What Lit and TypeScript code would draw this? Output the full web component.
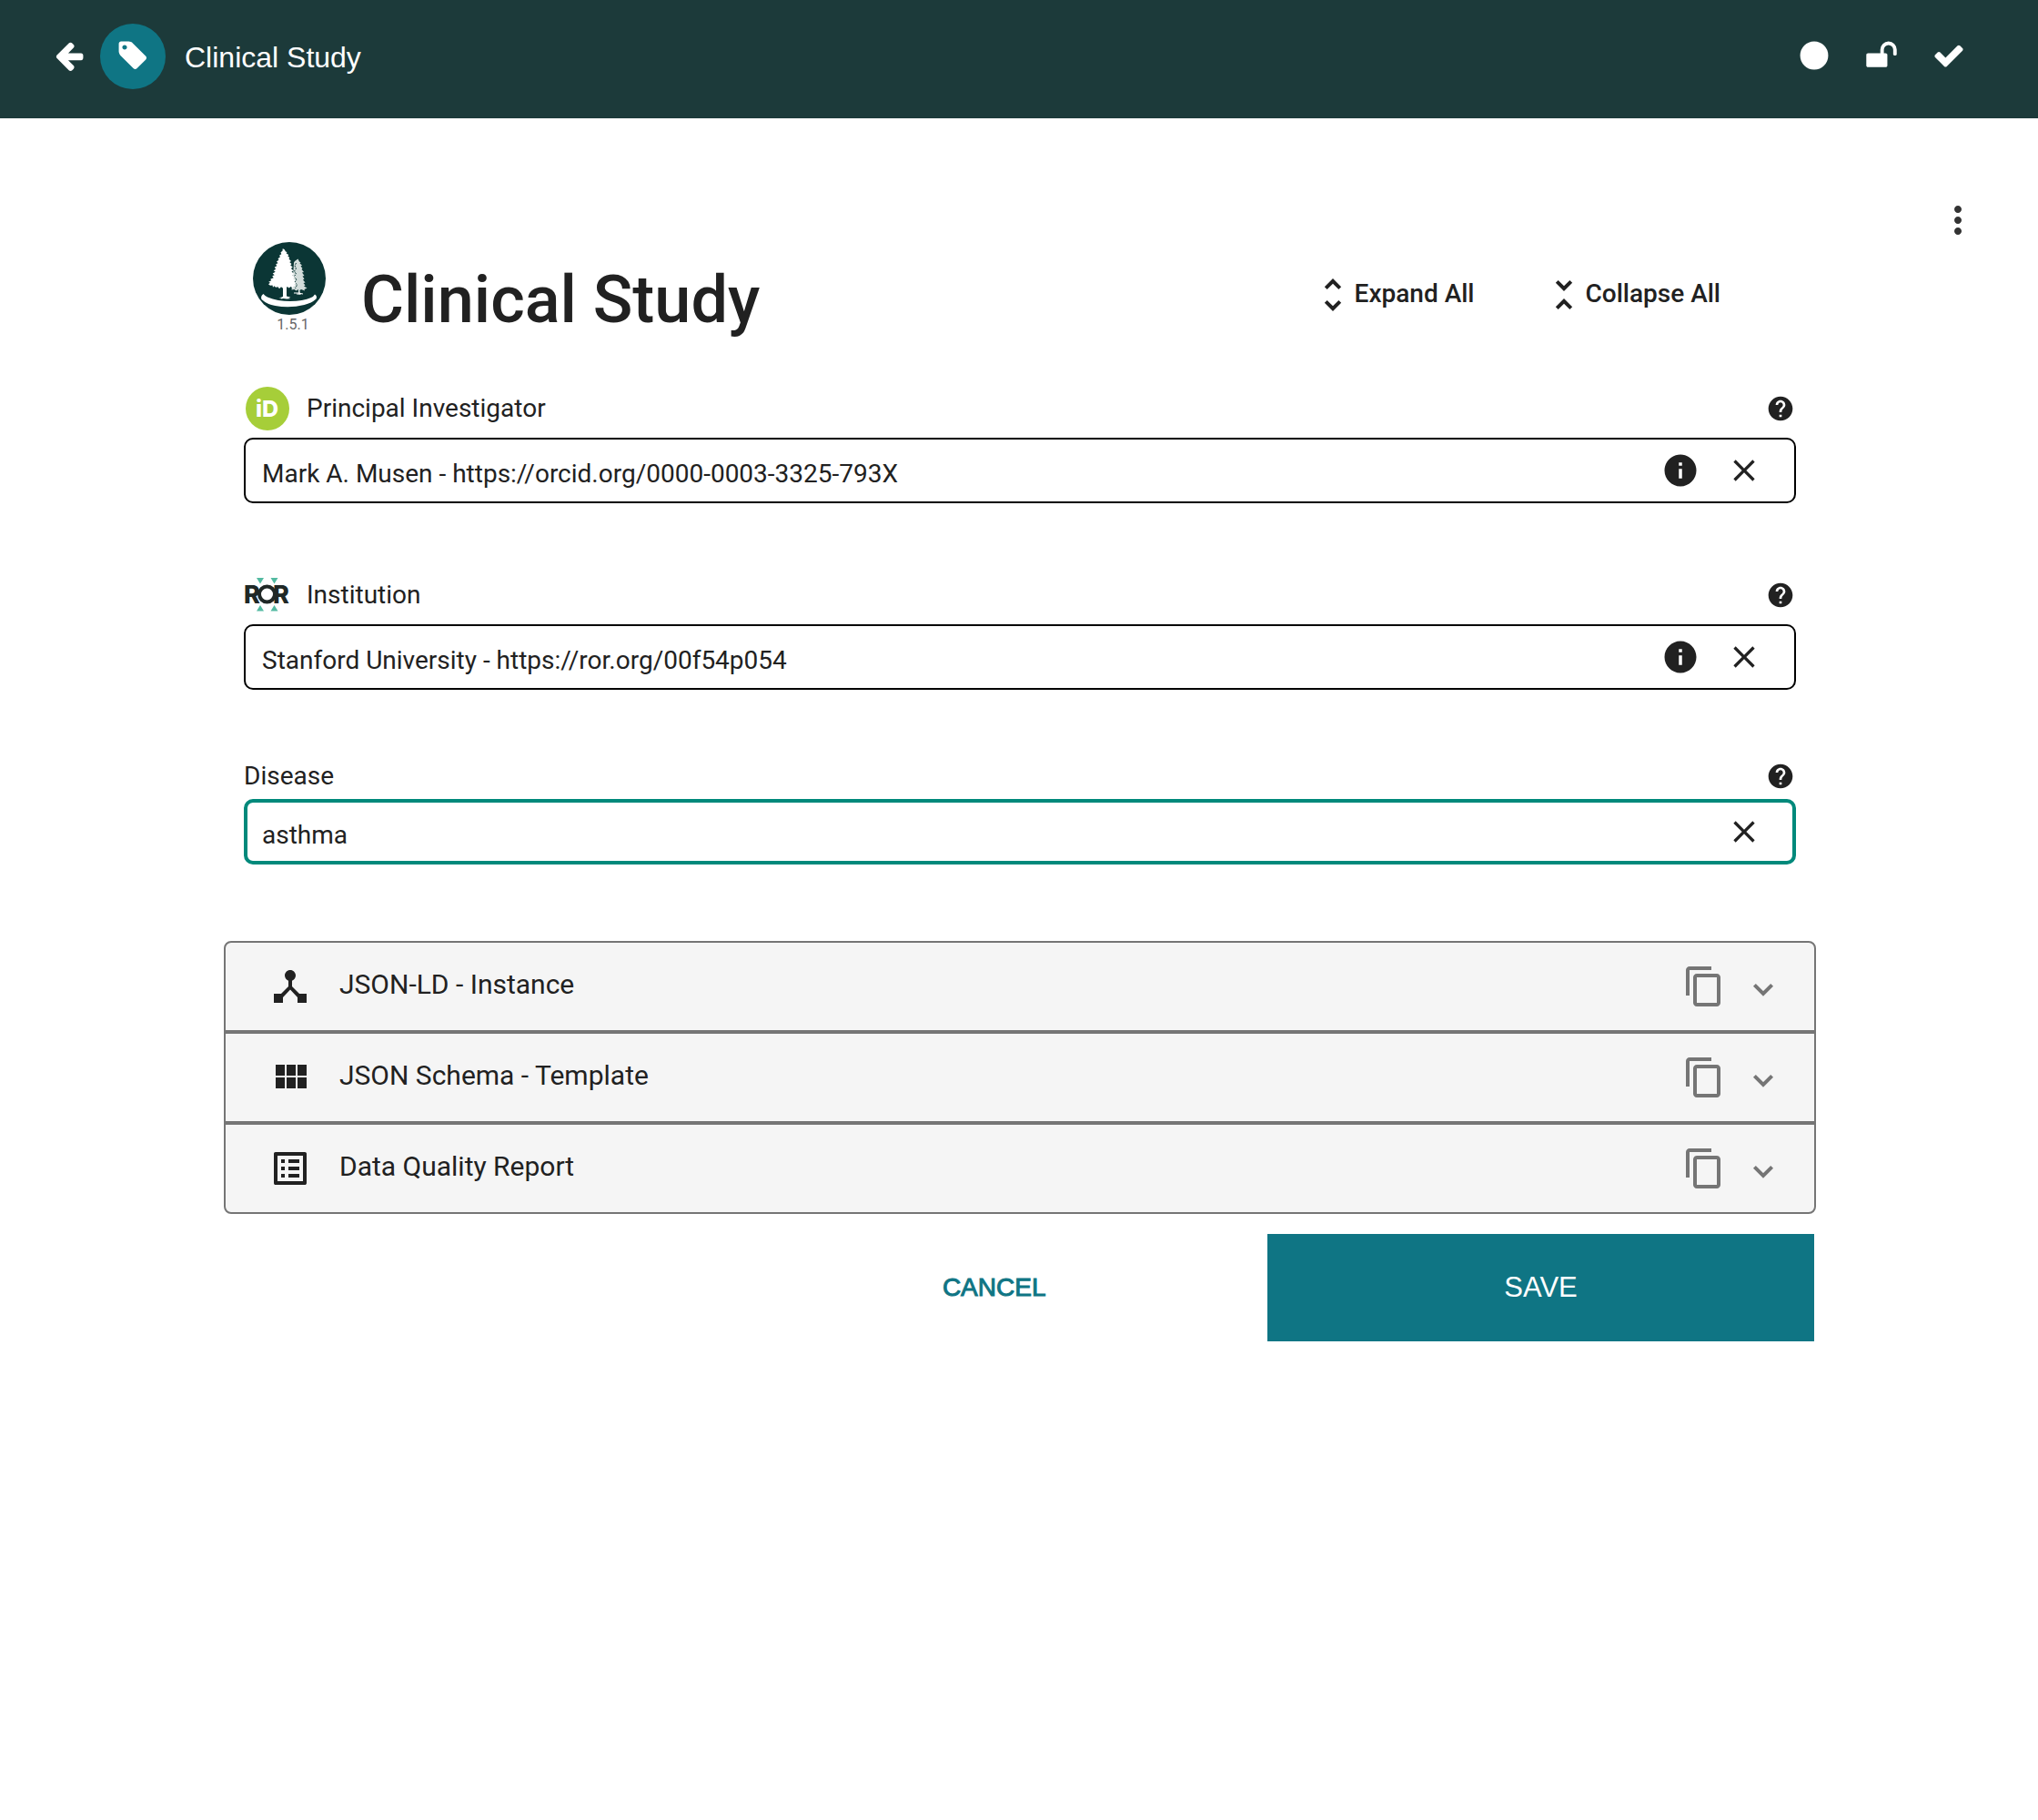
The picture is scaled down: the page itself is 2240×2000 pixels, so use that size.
import { LitElement, html, svg, css } from "lit";
import { customElement, property, state } from "lit/decorators.js";
import { classMap } from "lit/directives/class-map.js";

const MATERIAL: Record<string, string> = {
  more: "M12 8c1.1 0 2-.9 2-2s-.9-2-2-2-2 .9-2 2 .9 2 2 2zm0 2c-1.1 0-2 .9-2 2s.9 2 2 2 2-.9 2-2-.9-2-2-2zm0 6c-1.1 0-2 .9-2 2s.9 2 2 2 2-.9 2-2-.9-2-2-2z",
  unfoldMore:
    "M12 5.83L15.17 9l1.41-1.41L12 3 7.41 7.59 8.83 9 12 5.83zm0 12.34L8.83 15l-1.41 1.41L12 21l4.59-4.59L15.17 15 12 18.17z",
  unfoldLess:
    "M7.41 18.59L8.83 20 12 16.83 15.17 20l1.41-1.41L12 14l-4.59 4.59zm9.18-13.18L15.17 4 12 7.17 8.83 4 7.41 5.41 12 10l4.59-4.59z",
  help: "M12 2C6.48 2 2 6.48 2 12s4.48 10 10 10 10-4.48 10-10S17.52 2 12 2zm1 17h-2v-2h2v2zm2.07-7.75l-.9.92C13.45 12.9 13 13.5 13 15h-2v-.5c0-1.1.45-2.1 1.17-2.83l1.24-1.26c.37-.36.59-.86.59-1.41 0-1.1-.9-2-2-2s-2 .9-2 2H8c0-2.21 1.79-4 4-4s4 1.79 4 4c0 .88-.36 1.68-.93 2.25z",
  info: "M12 2C6.48 2 2 6.48 2 12s4.48 10 10 10 10-4.48 10-10S17.52 2 12 2zm1 15h-2v-6h2v6zm0-8h-2V7h2v2z",
  close:
    "M19 6.41L17.59 5 12 10.59 6.41 5 5 6.41 10.59 12 5 17.59 6.41 19 12 13.41 17.59 19 19 17.59 13.41 12z",
  hub: "M17 16l-4-4V8.82C14.16 8.4 15 7.3 15 6c0-1.66-1.34-3-3-3S9 4.34 9 6c0 1.3.84 2.4 2 2.82V12l-4 4H3v5h5v-3.05l4-4.2 4 4.2V21h5v-5h-4z",
  module:
    "M4 11h5V5H4v6zm0 7h5v-6H4v6zm6 0h5v-6h-5v6zm6 0h5v-6h-5v6zm-6-7h5V5h-5v6zm6-6v6h5V5h-5z",
  list: "M19 5v14H5V5h14m1.1-2H3.9c-.5 0-.9.4-.9.9v16.2c0 .4.4.9.9.9h16.2c.4 0 .9-.5.9-.9V3.900c0-.5-.5-.9-.9-.9zM11 7h6v2h-6V7zm0 4h6v2h-6v-2zm0 4h6v2h-6zM7 7h2v2H7zm0 4h2v2H7zm0 4h2v2H7z",
  copy: "M16 1H4c-1.1 0-2 .9-2 2v14h2V3h12V1zm3 4H8c-1.1 0-2 .9-2 2v14c0 1.1.9 2 2 2h11c1.1 0 2-.9 2-2V7c0-1.1-.9-2-2-2zm0 16H8V7h11v14z",
};

const AWESOME: Record<string, string> = {
  back: "M1664 896v128q0 53-32.5 90.5t-84.5 37.5h-704l293 294q38 36 38 90t-38 90l-75 76q-37 37-90 37-52 0-91-37l-651-652q-37-37-37-90 0-52 37-91l651-650q38-38 91-38 52 0 90 38l75 74q38 38 38 91t-38 91l-293 293h704q52 0 84.5 37.5t32.5 90.5z",
  tag: "M576 448q0-53-37.5-90.5t-90.5-37.5-90.5 37.5-37.5 90.5 37.5 90.5 90.5 37.5 90.5-37.5 37.5-90.5zm1067 576q0 53-37 90l-491 492q-39 37-91 37-53 0-90-37l-715-716q-38-37-64.5-101t-26.5-117v-416q0-52 38-90t90-38h416q53 0 117 26.5t102 64.5l715 714q37 39 37 91z",
  circle: "M1664 896a768 768 0 1 1-1536 0 768 768 0 1 1 1536 0z",
  unlock:
    "M1728 576v256q0 26-19 45t-45 19h-64q-26 0-45-19t-19-45v-256q0-106-75-181t-181-75-181 75-75 181v192h96q40 0 68 28t28 68v576q0 40-28 68t-68 28h-960q-40 0-68-28t-28-68v-576q0-40 28-68t68-28h672v-192q0-185 131.5-316.5t316.5-131.5 316.5 131.5 131.5 316.5z",
  check:
    "M1671 566q0 40-28 68l-724 724-136 136q-28 28-68 28t-68-28l-136-136-362-362q-28-28-28-68t28-68l136-136q28-28 68-28t68 28l294 295 656-657q28-28 68-28t68 28l136 136q28 28 28 68z",
};

const material = (name: string, size = "") => html`
  <svg class="icon ${size}" viewBox="0 0 24 24" aria-hidden="true"><path d=${MATERIAL[name]} /></svg>
`;

const awesome = (name: string) => html`
  <svg class="fa" viewBox="0 0 1792 1792" aria-hidden="true"><path d=${AWESOME[name]} /></svg>
`;

const cedarLogo = svg`
  <circle cx="40" cy="40" r="40" fill="#0b3635" />
  <path fill="#d3dddb" d="M49.500 18.500l1.500 3 1.500 1-1 1 2.500 2-1.500 1 2 2.500-1 1 2.500 3-2 .5 2.500 3.500-2 .5 2 3-1.500 1 2.500 3-2 .5 2 2.500-1.500 1 3.500 2-3 1.500.5 1.500-4-1.500-1.500 1 .5 4.500h-2l-.2-5.500-2.300 1.500-2-1.500-3 .5 1-10 1-12 .5-8 1-1.500z" />
  <path fill="none" stroke="#0b3635" stroke-width="1" d="M47.500 23l-1.500 3 1.500 3-2 3 2 3-2.500 3 3 3-2 3 2.500 3-2 4" stroke-dasharray="2 1" />
  <path fill="#fff" d="M34.500 8l1.500 2.500 1.500.5-.8 1.500 2.600 1.500-1 1.500 2 1.500-.8 1.500 2.500 2.500-1.800 1 2.300 2-1.300 1.500 2.500 2-1.800 1.500 2.600 2.500-2 1 2.800 2.500-1.800 1.500 2.800 2.500-2.300 1 2.500 2-1.200 1.500 2.200 2-2.300 1 1.800 1.500-2.500.5-.5 2-2.500-1.500-1.800 1.500-2-1.500-.7 1v9.500l3 .8 1.500.7-2.500.5 2 .8-4 .2-3.500-.5-3 .6.5-1-2.500-.3 3.500-.8 1-.8v-9l-2-1.500-2 2-1.500-2-2.500.5-1.500-1.500-1.500 1.500-.5-2.200-2.500.2-2-1.500 2-1.500-1.800-1 3-1.500-1-1.500 3.500-1.500-1.500-2 2.500-1-2-1.800 3-1.700-2-1.500 2.500-1.500-1.500-2 2.500-1.500-1-2 2.300-1-1.500-2 2.500-1.500-1-1.500 2.500-2-1-1.500 2.300-1.500-.8-2 2-1.500.2-2.500z" />
  <path fill="none" stroke="#fff" stroke-width="1" d="M45 56h5l5 1M48 57h5" />
  <path fill="#fff" d="M11.500 57q2 2.500 4.500 3.500 11 4.500 25 4.500 14 0 23-4 2.500-1 4-3.500 3 2 1.500 5-5 4.500-13 6.500-16 4-32 1-9-1.500-15-7-1.500-3.500 2-6z" />
`;

const orcidLogo = svg`
  <circle cx="25" cy="24" r="24" fill="#a6ce39" />
  <text x="12" y="33" font-family="Inter, sans-serif" font-size="25" font-weight="800" fill="#fff">iD</text>
`;

const rorLogo = svg`
  <g fill="#53baa1">
    <path d="M13 5h8l-4 6.500zM28.500 5h8l-4 6.500zM13 41.500h8l-4-6.500zM28.500 41.500h8l-4-6.500z" />
  </g>
  <g font-family="Inter, sans-serif" font-size="27" font-weight="800" fill="#202826">
    <text x="-1" y="33">R</text>
    <text x="31" y="33">R</text>
  </g>
  <circle cx="24.500" cy="23" r="8.500" fill="#fff" stroke="#202826" stroke-width="4" />
`;

interface Field {
  id: string;
  label: string;
  value: string;
  logo?: unknown;
  info?: boolean;
}

const FIELDS: Field[] = [
  {
    id: "investigator",
    label: "Principal Investigator",
    value: "Mark A. Musen - https://orcid.org/0000-0003-3325-793X",
    logo: orcidLogo,
    info: true,
  },
  {
    id: "institution",
    label: "Institution",
    value: "Stanford University - https://ror.org/00f54p054",
    logo: rorLogo,
    info: true,
  },
  { id: "disease", label: "Disease", value: "asthma" },
];

const PANELS = [
  { icon: "hub", title: "JSON-LD - Instance" },
  { icon: "module", title: "JSON Schema - Template" },
  { icon: "list", title: "Data Quality Report" },
];

@customElement("app-root")
export class AppRoot extends LitElement {
  @property() heading = "Clinical Study";
  @state() private active = "disease";

  static styles = css`
    :host {
      display: block;
      min-height: 100vh;
      background: #fff;
      color: #212121;
      font-family: Roboto, sans-serif;
      font-size: 28px;
      line-height: 32px;
    }
    * {
      box-sizing: border-box;
    }
    button {
      display: flex;
      align-items: center;
      margin: 0;
      padding: 0;
      border: 0;
      background: none;
      color: inherit;
      font: inherit;
      cursor: pointer;
    }
    svg {
      display: block;
      flex: none;
      overflow: visible;
    }
    .icon {
      width: 48px;
      height: 48px;
      fill: currentColor;
    }
    .icon.small {
      width: 32px;
      height: 32px;
    }
    .icon.medium {
      width: 40px;
      height: 40px;
    }
    .icon.info {
      width: 42px;
      height: 42px;
    }
    .fa {
      width: 36px;
      height: 36px;
      fill: currentColor;
    }
    .topbar {
      display: flex;
      align-items: center;
      height: 130px;
      padding: 0 80px 6px 58px;
      background: #1c3a3a;
      color: #fff;
      font-family: "Liberation Sans", sans-serif;
      font-size: 32px;
    }
    .bar-button {
      height: 38px;
      align-items: flex-start;
    }
    .badge {
      display: flex;
      justify-content: center;
      width: 72px;
      height: 72px;
      margin: 0 21px 0 16px;
      padding-top: 17px;
      border-radius: 50%;
      background: #0f7584;
    }
    .crumb {
      flex: 1;
      padding-top: 2px;
    }
    .status {
      display: flex;
      gap: 38px;
    }
    .tools {
      display: flex;
      justify-content: flex-end;
      padding: 88px 64px 0;
      color: #333;
    }
    main {
      padding: 0 244px 64px 246px;
    }
    .title-row {
      display: flex;
      align-items: center;
      min-height: 116px;
      padding: 0 105px 0 32px;
    }
    .brand {
      align-self: flex-start;
      width: 80px;
      margin-right: 39px;
      color: #666;
      font-size: 16px;
      line-height: 22px;
      text-align: center;
    }
    .brand-logo {
      width: 80px;
      height: 80px;
    }
    .version {
      padding-left: 8px;
    }
    h1 {
      flex: 1;
      margin: 0;
      padding-top: 11px;
      font-size: 72px;
      font-weight: 500;
      line-height: 84px;
    }
    .fold {
      display: flex;
      gap: 74px;
      font-weight: 500;
    }
    .fold-label {
      padding-bottom: 2px;
    }
    .fields {
      display: flex;
      flex-direction: column;
      gap: 77px;
      padding: 43px 22px 84px;
    }
    .field-head {
      display: flex;
      align-items: center;
      justify-content: space-between;
      min-height: 35px;
      margin-bottom: 8px;
      padding-right: 1px;
    }
    .field-label {
      display: flex;
      align-items: center;
      gap: 19px;
    }
    .field-logo {
      width: 50px;
      height: 48px;
    }
    .box {
      --line: 2px;
      display: flex;
      align-items: center;
      gap: 29px;
      height: 72px;
      padding: 0 calc(37px - var(--line)) 0 calc(20px - var(--line));
      border: var(--line) solid #000;
      border-radius: 10px;
    }
    .box.active {
      --line: 4px;
      border-color: #00897b;
    }
    input {
      flex: 1;
      min-width: 0;
      margin: 0;
      padding: 8px 0 0;
      border: 0;
      outline: 0;
      background: none;
      color: inherit;
      font: inherit;
    }
    .panel {
      display: flex;
      align-items: center;
      height: 100px;
      padding: 0 45px 0 47px;
      border: 2px solid #757575;
      background: #f5f5f5;
      color: #757575;
    }
    .panel:first-child {
      border-radius: 8px 8px 0 0;
    }
    .panel:last-child {
      border-radius: 0 0 8px 8px;
    }
    .panel-toggle {
      flex: 1;
      gap: 30px;
      color: #212121;
      font-size: 30px;
      line-height: 36px;
    }
    .panel-title {
      padding-bottom: 5px;
    }
    .chevron-button {
      margin-left: 30px;
      padding-top: 8px;
    }
    .chevron {
      width: 22px;
      height: 14px;
      fill: none;
      stroke: currentColor;
      stroke-width: 4px;
    }
    .actions {
      display: grid;
      grid-template-columns: 10fr 11fr 11fr;
      margin: 22px 2px 0 0;
      font-family: "Liberation Sans", sans-serif;
    }
    .action {
      justify-content: center;
      height: 118px;
    }
    .cancel {
      grid-column: 2;
      color: #0f7584;
      -webkit-text-stroke: 1px #0f7584;
    }
    .save {
      background: #0f7584;
      color: #fff;
      font-size: 31px;
    }
  `;

  private field(f: Field) {
    return html`
      <div>
        <div class="field-head">
          <label class="field-label" for=${f.id}>
            ${f.logo ? html`<svg class="field-logo" viewBox="-1 0 50 48" aria-hidden="true">${f.logo}</svg>` : ""}
            <span>${f.label}</span>
          </label>
          <button type="button" aria-label="Help">${material("help", "small")}</button>
        </div>
        <div class=${classMap({ box: true, active: this.active === f.id })}>
          <input id=${f.id} type="text" .value=${f.value} @focus=${() => (this.active = f.id)} />
          ${f.info ? html`<button type="button" aria-label="Details">${material("info", "info")}</button>` : ""}
          <button type="button" aria-label="Clear">${material("close", "medium")}</button>
        </div>
      </div>
    `;
  }

  private panel(p: { icon: string; title: string }) {
    return html`
      <section class="panel">
        <button type="button" class="panel-toggle">
          ${material(p.icon)}<span class="panel-title">${p.title}</span>
        </button>
        <button type="button" aria-label="Copy">${material("copy")}</button>
        <button type="button" class="chevron-button" aria-label="Expand">
          <svg class="chevron" viewBox="0 0 22 14" aria-hidden="true"><path d="M1.400 1.400L11 11l9.600-9.600" /></svg>
        </button>
      </section>
    `;
  }

  render() {
    return html`
      <header class="topbar">
        <button type="button" class="bar-button" aria-label="Back">${awesome("back")}</button>
        <span class="badge">${awesome("tag")}</span>
        <span class="crumb">${this.heading}</span>
        <div class="status">
          <button type="button" class="bar-button" aria-label="Status">${awesome("circle")}</button>
          <button type="button" class="bar-button" aria-label="Unlocked">${awesome("unlock")}</button>
          <button type="button" class="bar-button" aria-label="Valid">${awesome("check")}</button>
        </div>
      </header>
      <div class="tools">
        <button type="button" aria-label="More options">${material("more")}</button>
      </div>
      <main>
        <div class="title-row">
          <div class="brand">
            <svg class="brand-logo" viewBox="0 0 80 80" aria-hidden="true">${cedarLogo}</svg>
            <div class="version">1.5.1</div>
          </div>
          <h1>${this.heading}</h1>
          <div class="fold">
            <button type="button">${material("unfoldMore")}<span class="fold-label">Expand All</span></button>
            <button type="button">${material("unfoldLess")}<span class="fold-label">Collapse All</span></button>
          </div>
        </div>
        <div class="fields">${FIELDS.map((f) => this.field(f))}</div>
        <div>${PANELS.map((p) => this.panel(p))}</div>
        <div class="actions">
          <button type="button" class="action cancel">CANCEL</button>
          <button type="button" class="action save">SAVE</button>
        </div>
      </main>
    `;
  }
}
